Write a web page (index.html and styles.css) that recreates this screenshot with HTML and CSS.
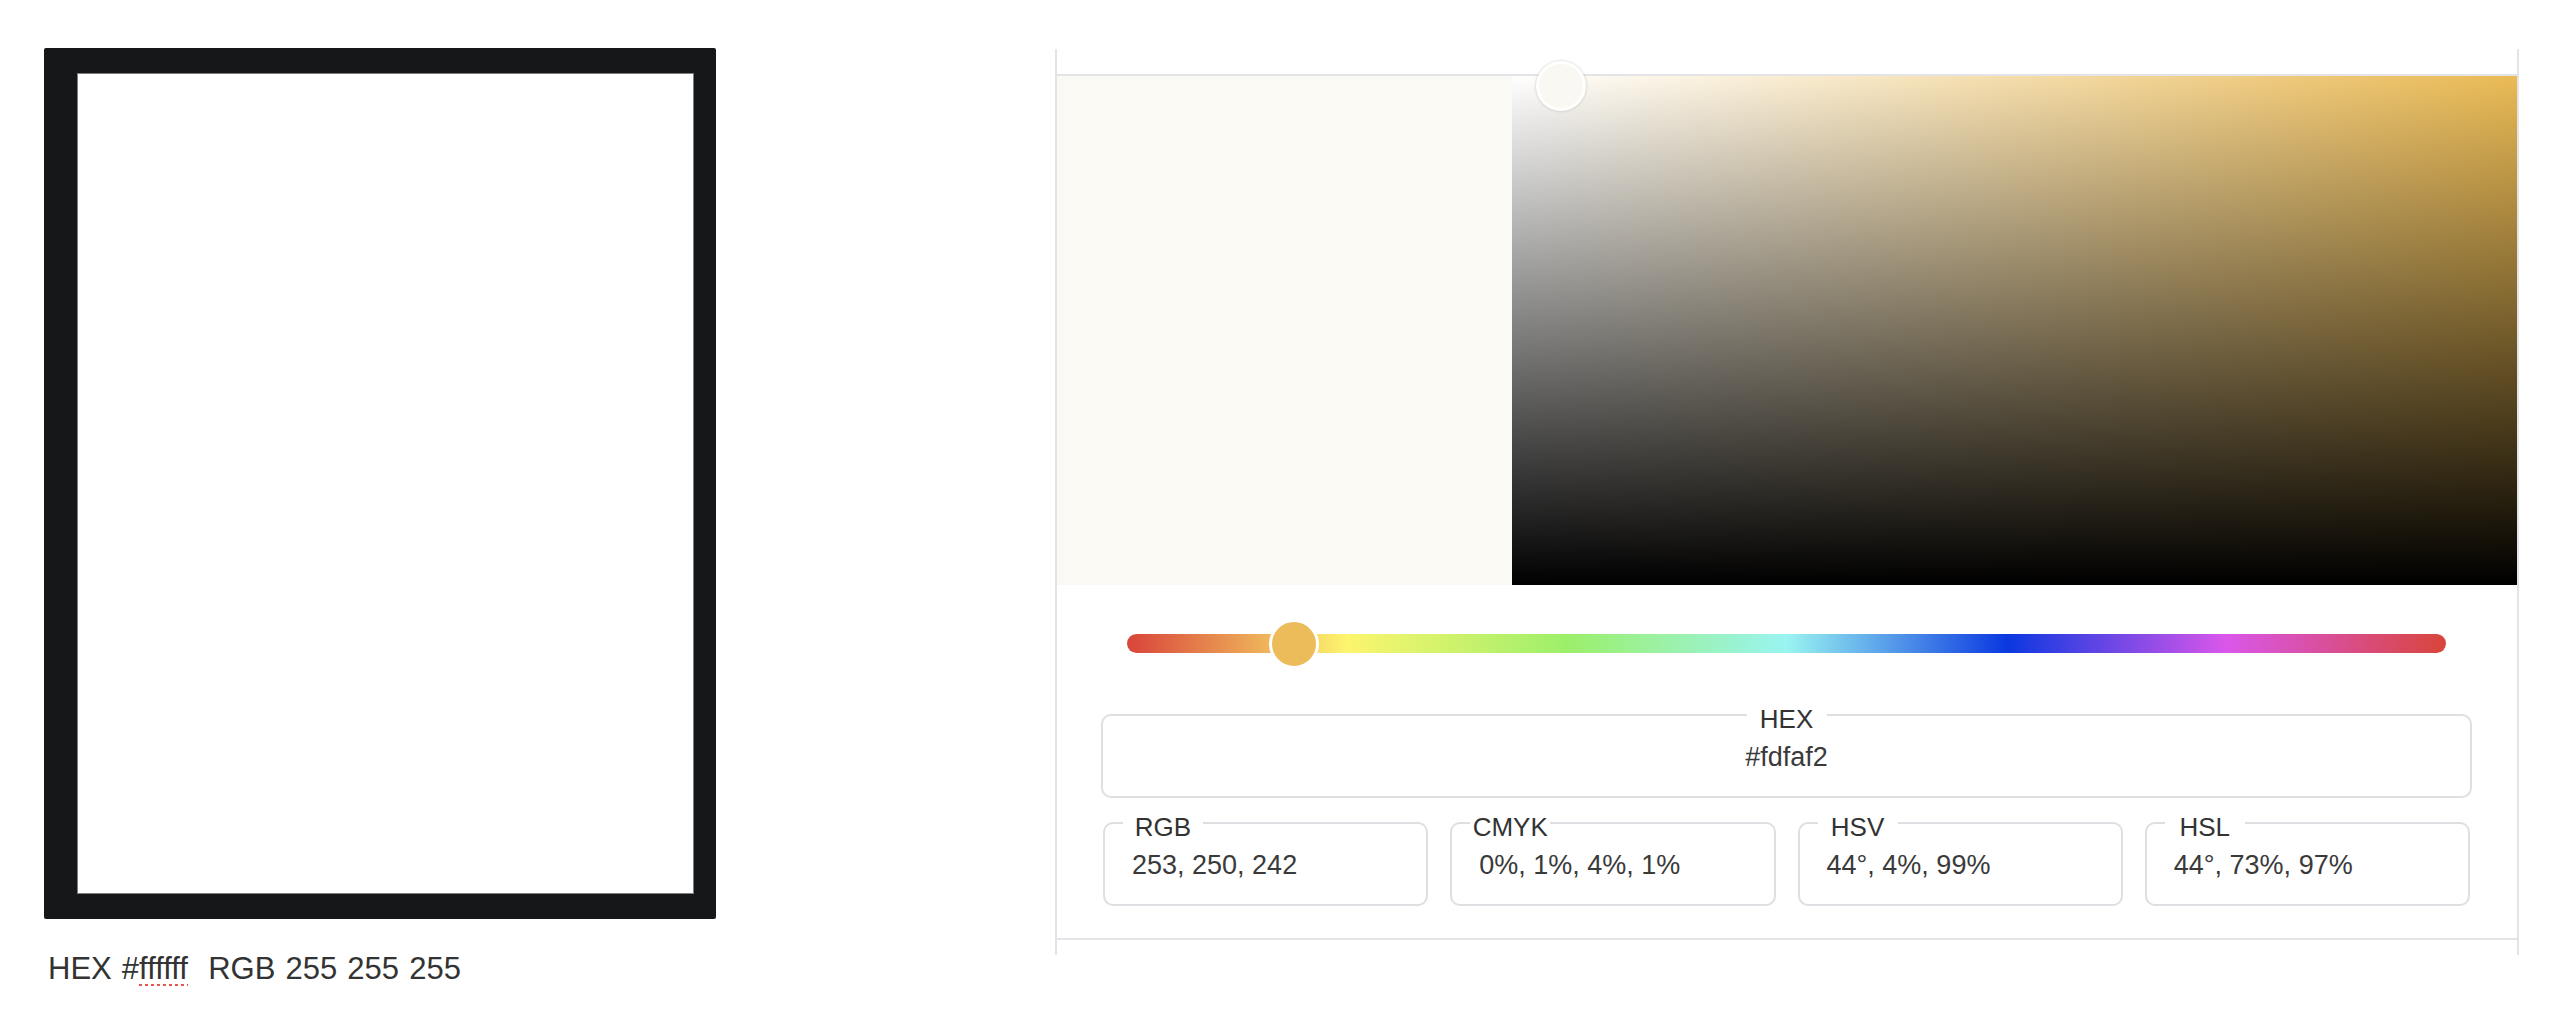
FILE: index.html
```html
<!DOCTYPE html>
<html lang="en">
<head>
<meta charset="utf-8">
<title>Color picker</title>
<link rel="stylesheet" href="styles.css">
</head>
<body>
<div class="page">
  <div class="left">
    <div class="frame"><div class="canvas"></div></div>
    <p class="caption">HEX #<span class="spell">ffffff</span>&nbsp; RGB 255 255 255</p>
  </div>
  <div class="panel">
    <div class="picker">
      <div class="area">
        <div class="preview"></div>
        <div class="sv"><span class="sv-pointer"></span></div>
      </div>
      <div class="hue">
        <div class="hue-track"><span class="hue-thumb"></span></div>
      </div>
      <fieldset class="field field-hex">
        <legend><span class="label">HEX</span></legend>
        <div class="value">#fdfaf2</div>
      </fieldset>
      <div class="fields">
        <fieldset class="field"><legend><span class="label">RGB</span></legend><div class="value">253, 250, 242</div></fieldset>
        <fieldset class="field"><legend><span class="label">CMYK</span></legend><div class="value">0%, 1%, 4%, 1%</div></fieldset>
        <fieldset class="field"><legend><span class="label">HSV</span></legend><div class="value">44°, 4%, 99%</div></fieldset>
        <fieldset class="field"><legend><span class="label">HSL</span></legend><div class="value">44°, 73%, 97%</div></fieldset>
      </div>
    </div>
  </div>
</div>
</body>
</html>
```

FILE: styles.css
```css
body {
  margin: 0;
  background: #ffffff;
  font-family: "Liberation Sans", Arial, sans-serif;
}

.page {
  display: flex;
  align-items: flex-start;
  gap: 339px;
  padding: 48px 0 0 44px;
}

.left {
  width: 672px;
}

.frame {
  background: #161719;
  padding: 25px 22px 25px 33px;
  border-radius: 2px;
}

.canvas {
  height: 819px;
  background: #ffffff;
  border: 1px solid #7d7d7d;
}

.caption {
  margin: 32px 0 0 4px;
  font-size: 31px;
  line-height: 35px;
  word-spacing: 1.5px;
  color: #333333;
  white-space: nowrap;
}

.spell {
  text-decoration: underline dotted #e2574f;
  text-decoration-thickness: 3px;
  text-underline-offset: 5px;
}

.panel {
  width: 1460px;
  margin-top: 1px;
  border-left: 2px solid #e4e4e8;
  border-right: 2px solid #e4e4e8;
  padding: 25px 0 15px;
}

.picker {
  border-top: 2px solid #e4e4e8;
  border-bottom: 2px solid #e4e4e8;
  padding-bottom: 32px;
}

.area {
  display: flex;
  height: 509px;
}

.preview {
  width: 455px;
  background: #faf9f3;
}

.sv {
  flex: 1;
  position: relative;
  background:
    linear-gradient(to bottom, rgba(0, 0, 0, 0), #000000),
    linear-gradient(to right, #ffffff, #eaba55);
}

.sv-pointer {
  position: absolute;
  left: 49px;
  top: 10px;
  width: 44px;
  height: 44px;
  border: 3px solid #ffffff;
  border-radius: 50%;
  background: #faf8f2;
  transform: translate(-50%, -50%);
  box-shadow: 0 0 3px rgba(0, 0, 0, 0.22);
}

.hue {
  padding: 49px 71px 0 70px;
}

.hue-track {
  position: relative;
  height: 19px;
  border-radius: 10px;
  background: linear-gradient(to right,
    #d8443a 0%,
    #fdf56e 16.7%,
    #9cef6a 33.3%,
    #9af4f1 50%,
    #0a38e0 66.7%,
    #d957ea 83.3%,
    #d8453a 100%);
}

.hue-thumb {
  position: absolute;
  left: 167px;
  top: 50%;
  width: 44px;
  height: 44px;
  border: 3px solid #ffffff;
  border-radius: 50%;
  background: #ecbc5a;
  transform: translate(-50%, -50%);
}

.field {
  margin: 0;
  min-width: 0;
  padding: 8px 0 23px;
  border: 2px solid #dfdfe3;
  border-radius: 10px;
}

.field legend {
  box-sizing: border-box;
  width: 80px;
  margin-left: 18px;
  padding: 8px 0 0;
  font-size: 26px;
  line-height: 30px;
  color: #333333;
}

.label {
  display: block;
  text-align: center;
}

.field-hex {
  margin: 43px 45px 0 44px;
}

.field-hex legend {
  margin-left: auto;
  margin-right: auto;
}

.value {
  padding-left: 27px;
  font-size: 27px;
  line-height: 31px;
  color: #3a3a3a;
  white-space: nowrap;
}

.field-hex .value {
  padding-left: 0;
  text-align: center;
}

.fields {
  display: grid;
  grid-template-columns: repeat(4, 1fr);
  gap: 22px;
  margin: 6px 47px 0 46px;
}
```
